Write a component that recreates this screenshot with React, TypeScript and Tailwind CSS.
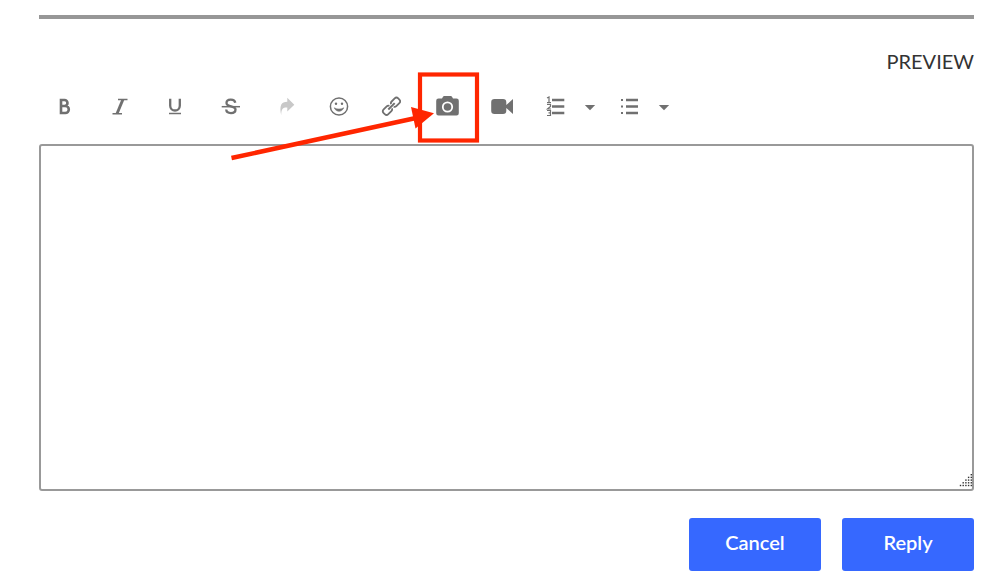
import type { ReactNode } from 'react';

interface IToolButtonProps {
  label: string;
  className: string;
  viewBox: string;
  children: ReactNode;
}

/**
 * ToolButton - One icon button of the editor toolbar.
 */
const ToolButton = ({ label, className, viewBox, children }: IToolButtonProps) => (
  <button type="button" aria-label={label} title={label} className={`h-6 shrink-0 cursor-pointer ${className}`}>
    <svg viewBox={viewBox} className="h-6 w-full" fill="none" stroke="currentColor" aria-hidden="true">
      {children}
    </svg>
  </button>
);

const Caret = ({ label }: { label: string }) => (
  <ToolButton label={label} className="w-3" viewBox="0 0 12 24">
    <path d="M.8 11h10.400L6 16.300z" fill="currentColor" stroke="none" />
  </ToolButton>
);

/**
 * Callout - Red frame around the camera button with an arrow leading to it.
 */
const Callout = () => (
  <svg
    viewBox="0 0 254 94"
    className="pointer-events-none absolute -top-6 right-[-22px] z-10 h-[94px] w-[254px] max-w-none"
    aria-hidden="true"
  >
    <rect x="192" y="4.5" width="57" height="66" fill="none" stroke="#ff2600" strokeWidth="4.2" />
    <path d="M3.5 88 188 48" stroke="#ff2600" strokeWidth="4.5" />
    <path d="m183 37 23 6.3L187.500 58.500z" fill="#ff2600" />
  </svg>
);

const Toolbar = () => (
  <div role="toolbar" aria-label="Formatting" className="flex items-center gap-[31px] pl-[14px] text-[#707070]">
    <ToolButton label="Bold" className="w-6" viewBox="0 0 24 24">
      <path d="M8 6h3.500a3 3 0 0 1 0 6H8zM8 12h4.300a3.500 3.500 0 0 1 0 7H8z" strokeWidth="2.600" />
    </ToolButton>
    <ToolButton label="Italic" className="w-6" viewBox="0 0 24 24">
      <path d="M10 5.500h9.500M4.500 19.700h9.500" strokeWidth="1.500" />
      <path d="m14.900 5.500-5.800 14" strokeWidth="2.900" />
    </ToolButton>
    <ToolButton label="Underline" className="w-6" viewBox="0 0 24 24">
      <path d="M7.200 4.700v7a4.800 4.800 0 0 0 9.600 0v-7" strokeWidth="2.300" />
      <path d="M6 19.500h12" strokeWidth="1.500" />
    </ToolButton>
    <ToolButton label="Strikethrough" className="w-6" viewBox="0 0 24 24">
      <path
        d="M17.300 8.800C16.500 4.500 8.500 4.800 8.500 9c0 4.500 9 2.300 9 6.500 0 4.700-9 4.700-9.300 0"
        strokeWidth="2.300"
      />
      <path d="M3.700 12.700H22" strokeWidth="1.500" />
    </ToolButton>
    <ToolButton label="Quote" className="w-6 text-[#c8c8c8]" viewBox="0 0 24 24">
      <path
        d="M8.200 21C7.200 17 7 13 8.300 10.500c1-2 3-2.800 6-2.800V3.800l7 7-7 6.800v-4c-4.300-.2-6 1.400-6.100 7.400z"
        fill="currentColor"
        stroke="none"
      />
    </ToolButton>
    <ToolButton label="Emoji" className="w-[22px]" viewBox="0 0 22 24">
      <circle cx="11" cy="12.500" r="8.600" strokeWidth="1.500" />
      <circle cx="8" cy="9.800" r="1.200" fill="currentColor" stroke="none" />
      <circle cx="14" cy="9.800" r="1.200" fill="currentColor" stroke="none" />
      <path d="M6.300 13.800c1.500 4.600 7.900 4.600 9.400 0-2 1.700-7.400 1.700-9.400 0z" fill="currentColor" strokeWidth=".6" />
    </ToolButton>
    <ToolButton label="Link" className="w-5" viewBox="0 0 20 24">
      <g transform="rotate(-45 10.500 12.300)" strokeWidth="1.800">
        <path d="M9.300 10.500A2.500 2.500 0 0 0 7 9H2.700A2.500 2.500 0 0 0 .2 11.500v1.600a2.500 2.500 0 0 0 2.500 2.500H7a2.500 2.500 0 0 0 2.300-1.500" />
        <path d="M11.700 10.500A2.500 2.500 0 0 1 14 9h4.300a2.500 2.500 0 0 1 2.500 2.500v1.600a2.500 2.500 0 0 1-2.500 2.500H14a2.500 2.500 0 0 1-2.300-1.500" />
        <path d="M6 12.300h9" strokeWidth="2" />
      </g>
    </ToolButton>
    <div className="relative flex">
      <ToolButton label="Insert photo" className="w-7" viewBox="0 0 28 24">
        <path
          d="M6.500 4.500H10l1-1.700q.4-.8 1.200-.8h6.600q.8 0 1.200.8l1 1.700h3.500a2.300 2.300 0 0 1 2.300 2.300v12.400a2.300 2.300 0 0 1-2.300 2.300h-18a2.300 2.300 0 0 1-2.300-2.300V6.800a2.300 2.300 0 0 1 2.300-2.300z"
          fill="currentColor"
          stroke="none"
        />
        <circle cx="15.500" cy="13" r="4.700" stroke="#fff" strokeWidth="1.800" />
      </ToolButton>
      <Callout />
    </div>
    <ToolButton label="Insert video" className="w-[22px]" viewBox="0 0 22 24">
      <path
        d="M3.500 5h8.500A3.300 3.300 0 0 1 15.300 8.300v8.400a3.300 3.300 0 0 1-3.300 3.300H3.500A3.300 3.300 0 0 1 .2 16.700V8.300A3.300 3.300 0 0 1 3.500 5zM15.300 11 22 5v15l-6.700-6z"
        fill="currentColor"
        stroke="none"
      />
    </ToolButton>
    <div className="flex items-center gap-[22px]">
      <div className="flex gap-[18px]">
        <ToolButton label="Numbered list" className="w-[22px]" viewBox="0 0 22 24">
          <path d="M8 6h12.300M8 12.500h12.300M8 19h12.300" strokeWidth="2.400" />
          <path
            d="M3 4l2-1v5.500M3 8.700h4M3 10.500h3.500v2L3.500 15H7M3 16.500h3.500v2.300H4.500h2v2.700H3"
            strokeWidth="1.200"
          />
        </ToolButton>
        <Caret label="Numbered list styles" />
      </div>
      <div className="flex gap-[18px]">
        <ToolButton label="Bulleted list" className="w-[22px]" viewBox="0 0 22 24">
          <path d="M8 6h12M8 12.500h12M8 19h12" strokeWidth="2.400" />
          <path d="M3 6h2M3 12.500h2M3 19h2" strokeWidth="2" />
        </ToolButton>
        <Caret label="Bulleted list styles" />
      </div>
    </div>
  </div>
);

/** Dots of the resize grip, longest row at the bottom. */
const gripRows = [1, 2, 3, 4, 5];

const ResizeGrip = () => (
  <svg viewBox="0 0 14 14" className="pointer-events-none absolute right-px bottom-[3px] size-[14px]" aria-hidden="true">
    {gripRows.map((count, row) =>
      Array.from({ length: count }, (_, i) => (
        <rect key={`${row}-${i}`} x={11.6 - i * 2.7} y={row * 2.7} width="1.4" height="1.4" fill="#333" />
      ))
    )}
  </svg>
);

/**
 * App - Reply editor with toolbar, text area and actions.
 */
export default function App() {
  return (
    <main className="bg-white pt-[15px] pr-[25px] pb-4 pl-[39px] font-['Lato','Liberation_Sans',sans-serif] text-xl">
      <hr className="h-1 border-0 bg-[#979797]" />
      <div className="mt-7 flex h-7 justify-end">
        <button type="button" className="cursor-pointer leading-7 text-[#333333]">
          PREVIEW
        </button>
      </div>
      <div className="mt-[19px]">
        <Toolbar />
      </div>
      <div className="relative mt-[26px]">
        <textarea
          aria-label="Reply text"
          className="block h-[347px] w-full resize-none rounded-[3px] border-2 border-[#999999] p-3 text-[#333333] outline-none"
        />
        <ResizeGrip />
      </div>
      <div className="mt-[27px] flex justify-end gap-[21px] font-semibold text-white">
        <button type="button" className="h-[53px] w-[132px] cursor-pointer rounded-[3px] bg-[#3668ff] pb-[6px]">
          Cancel
        </button>
        <button type="button" className="h-[53px] w-[132px] cursor-pointer rounded-[3px] bg-[#3668ff] pb-[6px]">
          Reply
        </button>
      </div>
    </main>
  );
}
